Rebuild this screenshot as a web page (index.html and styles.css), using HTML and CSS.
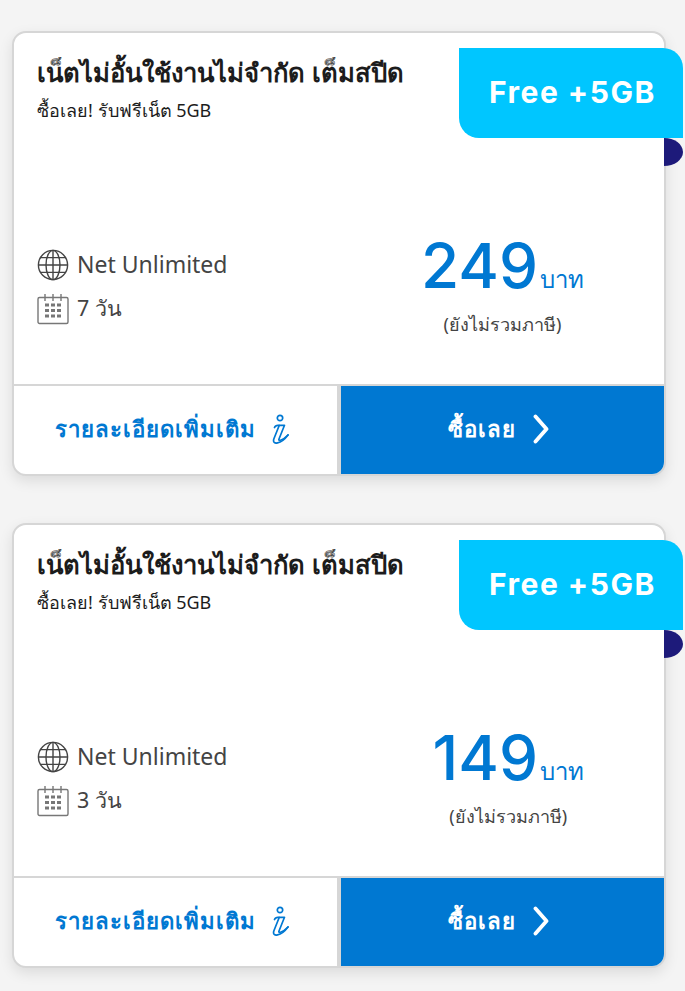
FILE: index.html
```html
<!DOCTYPE html>
<html lang="en">
<head>
    <meta charset="UTF-8">
    <meta name="viewport" content="width=device-width, initial-scale=1.0">
    <title>Packages</title>
    <link rel="stylesheet" href="styles.css">
</head>
<body>
    <div class="list">
        <div class="card">
            <div class="ribbon">Free +5GB</div>
            <div class="ribbon-fold"></div>
            <div class="head">
                <h2>เน็ตไม่อั้นใช้งานไม่จำกัด เต็มสปีด</h2>
                <p>ซื้อเลย! รับฟรีเน็ต 5GB</p>
            </div>
            <div class="info">
                <div class="specs">
                    <div class="spec">
                        <svg class="spec-icon" viewBox="0 0 32 32" fill="none" stroke="#444" stroke-width="1.4">
                            <circle cx="16" cy="16" r="14.6"/>
                            <ellipse cx="16" cy="16" rx="7" ry="14.6"/>
                            <path d="M16 1.4v29.2M1.4 16h29.2M3.6 8.6h24.8M3.6 23.4h24.8"/>
                        </svg>
                        <span>Net Unlimited</span>
                    </div>
                    <div class="spec">
                        <svg class="spec-icon" viewBox="0 0 32 32" fill="none" stroke="#777" stroke-width="1.4">
                            <rect x="1" y="4.5" width="30" height="26" rx="1.5"/>
                            <path d="M8 1v7M16 1v7M24 1v7"/>
                            <path d="M8 12h4M14 12h4M20 12h4M8 17.5h4M14 17.5h4M20 17.5h4M8 23h4M14 23h4M20 23h4" stroke-width="3"/>
                        </svg>
                        <span class="days">7 วัน</span>
                    </div>
                </div>
                <div class="price">
                    <div class="amount"><b>249</b><span>บาท</span></div>
                    <div class="tax">(ยังไม่รวมภาษี)</div>
                </div>
            </div>
            <div class="actions">
                <a href="#" class="btn btn-more">รายละเอียดเพิ่มเติม
                    <svg class="info-icon" viewBox="0 0 18 30" fill="none" stroke="#0078d2" stroke-width="1.7" stroke-linecap="round" stroke-linejoin="round">
                        <circle cx="9" cy="4" r="2.7"/>
                        <path d="M3.5 13.5c.6-1.6 1.6-2.2 3.4-2.2h6.6L8 25c-1 2.6 3.5 1.5 9-4"/>
                        <path d="M8.2 11.5L3 24.5c-1.5 4 1 5 3.5 4.4 3.5-.7 7-3.2 10.5-7.9"/>
                    </svg>
                </a>
                <a href="#" class="btn btn-buy">ซื้อเลย
                    <svg class="chev" viewBox="0 0 16 30" fill="none" stroke="#fff" stroke-width="3.8" stroke-linecap="round" stroke-linejoin="round">
                        <path d="M2.5 2.5l11 12.5-11 12.5"/>
                    </svg>
                </a>
            </div>
        </div>

        <div class="card">
            <div class="ribbon">Free +5GB</div>
            <div class="ribbon-fold"></div>
            <div class="head">
                <h2>เน็ตไม่อั้นใช้งานไม่จำกัด เต็มสปีด</h2>
                <p>ซื้อเลย! รับฟรีเน็ต 5GB</p>
            </div>
            <div class="info">
                <div class="specs">
                    <div class="spec">
                        <svg class="spec-icon" viewBox="0 0 32 32" fill="none" stroke="#444" stroke-width="1.4">
                            <circle cx="16" cy="16" r="14.6"/>
                            <ellipse cx="16" cy="16" rx="7" ry="14.6"/>
                            <path d="M16 1.4v29.2M1.4 16h29.2M3.6 8.6h24.8M3.6 23.4h24.8"/>
                        </svg>
                        <span>Net Unlimited</span>
                    </div>
                    <div class="spec">
                        <svg class="spec-icon" viewBox="0 0 32 32" fill="none" stroke="#777" stroke-width="1.4">
                            <rect x="1" y="4.5" width="30" height="26" rx="1.5"/>
                            <path d="M8 1v7M16 1v7M24 1v7"/>
                            <path d="M8 12h4M14 12h4M20 12h4M8 17.5h4M14 17.5h4M20 17.5h4M8 23h4M14 23h4M20 23h4" stroke-width="3"/>
                        </svg>
                        <span class="days">3 วัน</span>
                    </div>
                </div>
                <div class="price">
                    <div class="amount"><b>149</b><span>บาท</span></div>
                    <div class="tax">(ยังไม่รวมภาษี)</div>
                </div>
            </div>
            <div class="actions">
                <a href="#" class="btn btn-more">รายละเอียดเพิ่มเติม
                    <svg class="info-icon" viewBox="0 0 18 30" fill="none" stroke="#0078d2" stroke-width="1.7" stroke-linecap="round" stroke-linejoin="round">
                        <circle cx="9" cy="4" r="2.7"/>
                        <path d="M3.5 13.5c.6-1.6 1.6-2.2 3.4-2.2h6.6L8 25c-1 2.6 3.5 1.5 9-4"/>
                        <path d="M8.2 11.5L3 24.5c-1.5 4 1 5 3.5 4.4 3.5-.7 7-3.2 10.5-7.9"/>
                    </svg>
                </a>
                <a href="#" class="btn btn-buy">ซื้อเลย
                    <svg class="chev" viewBox="0 0 16 30" fill="none" stroke="#fff" stroke-width="3.8" stroke-linecap="round" stroke-linejoin="round">
                        <path d="M2.5 2.5l11 12.5-11 12.5"/>
                    </svg>
                </a>
            </div>
        </div>
    </div>
</body>
</html>
```

FILE: styles.css
```css
:root {
    --blue: #0078d2;
    --sky: #00c6ff;
    --navy: #1d1a7a;
    --line: #d6d6d6;
}
html, body { height: 100%; }
body {
    margin: 0;
    background: #f4f4f4;
    font-family: "Noto Sans", "Open Sans", sans-serif;
    color: #1c1c1c;
    overflow: hidden;
}
.list {
    display: flex;
    flex-direction: column;
    gap: 47px;
    padding: 31px 19px 0 12px;
}
.card {
    position: relative;
    height: 445px;
    box-sizing: border-box;
    display: flex;
    flex-direction: column;
    background: white;
    border: 2px solid var(--line);
    border-radius: 14px;
    box-shadow: 0 5px 14px rgba(0,0,0,0.1);
}
.ribbon {
    position: absolute;
    top: 15px;
    right: -19px;
    width: 224px;
    height: 90px;
    box-sizing: border-box;
    padding: 0 0 2px 30px;
    display: flex;
    align-items: center;
    background: var(--sky);
    border-radius: 0 20px 0 20px;
    color: white;
    font-family: Inter, "Liberation Sans", sans-serif;
    font-weight: 700;
    font-size: 30px;
    letter-spacing: 1.5px;
    z-index: 2;
}
.ribbon-fold {
    position: absolute;
    top: 105px;
    right: -19px;
    width: 19px;
    height: 28px;
    background: var(--navy);
    border-top-right-radius: 100% 50%;
    border-bottom-right-radius: 100% 50%;
}
.head { padding: 22px 23px 0; }
.head h2 { margin: 0; font-size: 25.6px; line-height: 36px; font-weight: 600; }
.head p { margin: 6px 0 0; font-size: 18px; line-height: 26px; }
.info {
    flex: 1;
    display: flex;
    justify-content: space-between;
    padding-top: 126px;
}
.specs { padding-left: 23px; display: flex; flex-direction: column; gap: 12px; }
.spec {
    display: flex;
    align-items: center;
    gap: 8px;
    height: 32px;
    font-size: 23px;
    color: #444;
}
.spec span { position: relative; top: -1px; }
.spec .days { font-size: 21.5px; }
.spec-icon { width: 32px; height: 32px; flex: none; }
.price { margin: -14px 80px 0 0; text-align: center; }
.amount { color: var(--blue); line-height: 62px; height: 62px; white-space: nowrap; }
.amount b { font-family: Inter, "Noto Sans", sans-serif; font-size: 62px; font-weight: 500; }
.amount span { font-size: 24px; margin-left: 2px; }
.tax { margin-top: 13px; font-size: 18px; color: #444; }
.actions { display: flex; height: 90px; border-top: 2px solid var(--line); flex: none; box-sizing: border-box; }
.btn {
    flex: 1;
    display: flex;
    align-items: center;
    justify-content: center;
    padding-bottom: 3px;
    text-decoration: none;
    font-size: 22.2px;
    font-weight: 600;
    letter-spacing: 1px;
}
.btn-more { color: var(--blue); gap: 15px; padding-right: 7px; border-right: 4px solid var(--line); }
.btn-buy { color: white; background: var(--blue); gap: 17px; padding-right: 8px; border-bottom-right-radius: 12px; }
.info-icon { width: 18px; height: 30px; }
.chev { width: 16px; height: 30px; }
```
